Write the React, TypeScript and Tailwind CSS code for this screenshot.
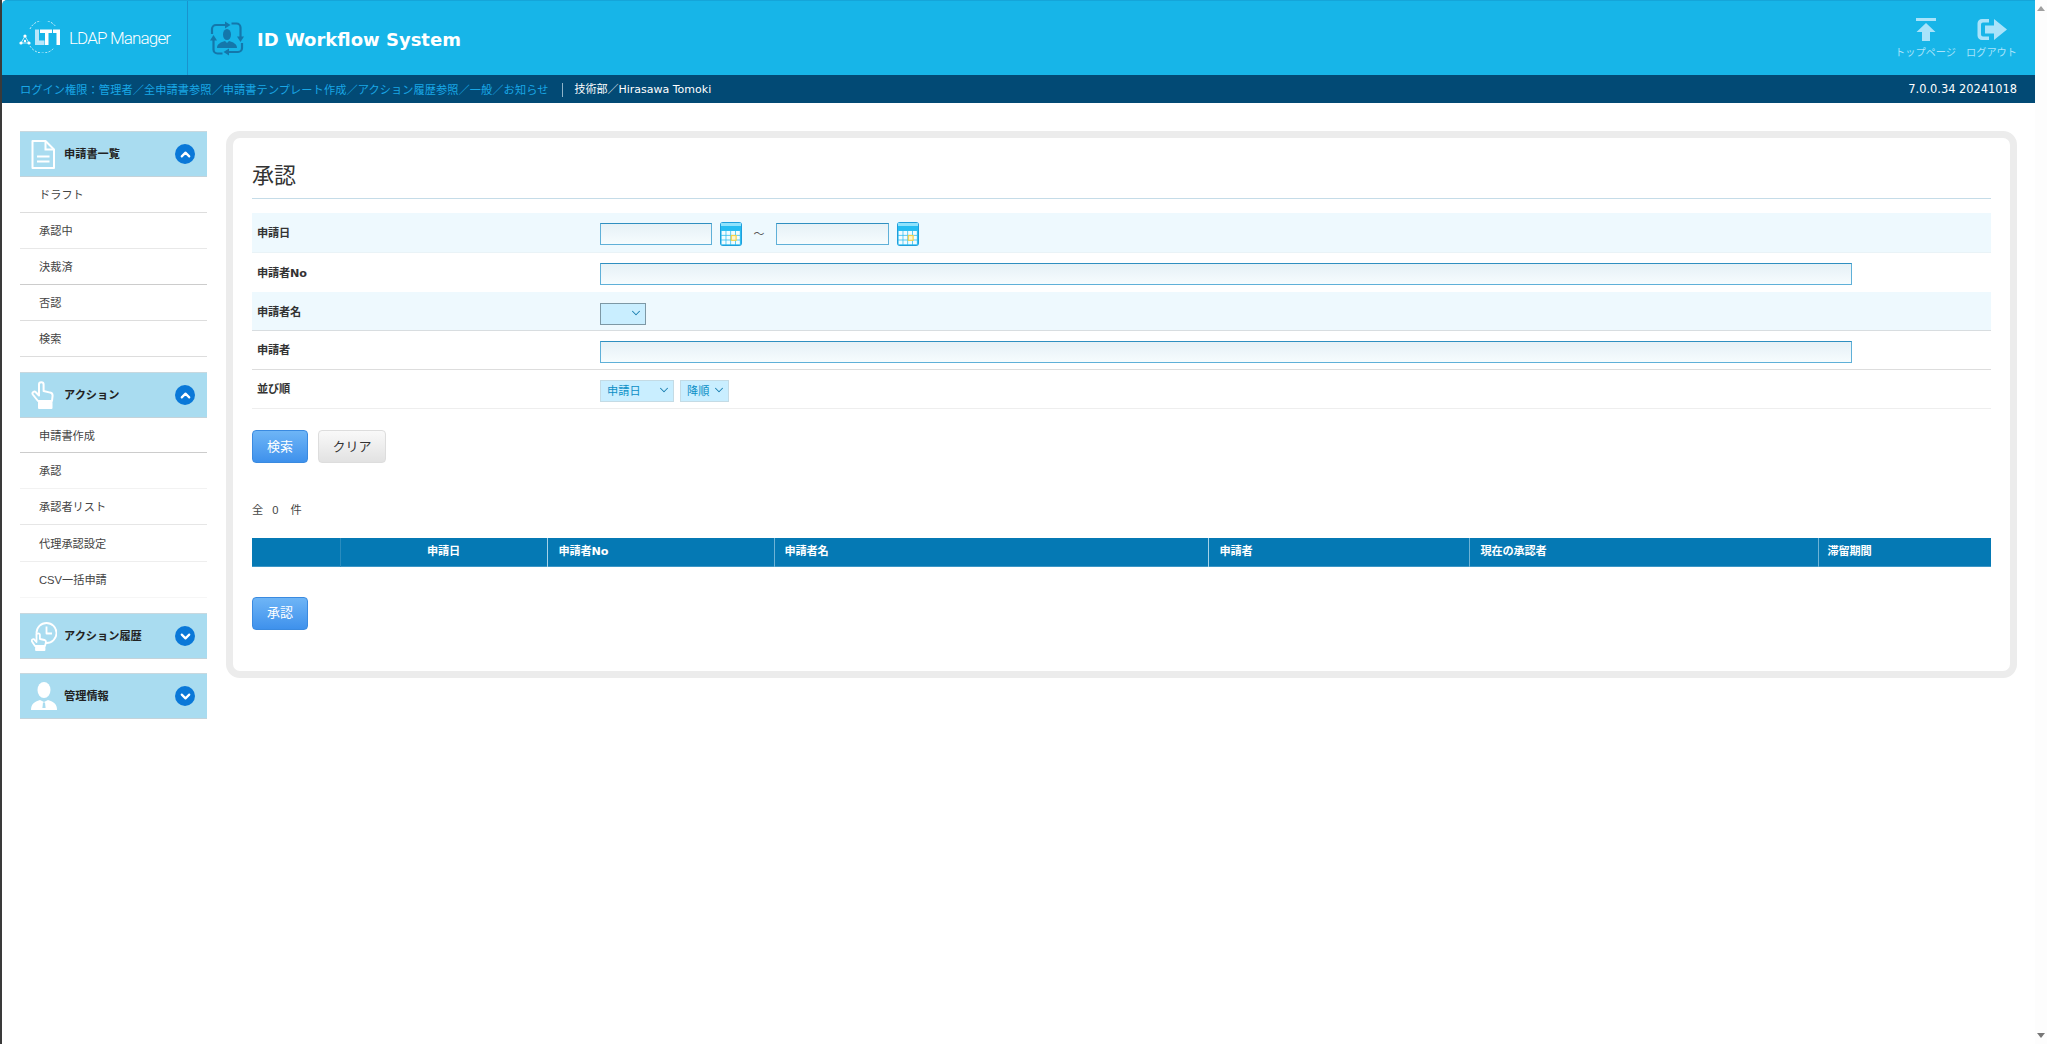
import { ChevronDown, ChevronUp } from "lucide-react";
import type { ReactNode } from "react";

function DocIcon() {
  return (
    <svg width="24" height="29" viewBox="0 0 24 29" fill="none" stroke="#fff" strokeWidth="2">
      <path d="M1.5 1h13L23 9.5V28H1.5z" strokeLinejoin="round" />
      <path d="M14.5 1v8.5H23" />
      <path d="M6 16.5h12.5M6 21.5h12.5" strokeWidth="2.2" />
    </svg>
  );
}

function HandIcon() {
  return (
    <svg width="25" height="28" viewBox="0 0 25 28" fill="none" stroke="#fff" strokeWidth="2" strokeLinejoin="round">
      <path d="M7 20 1.8 13.5a1.9 1.9 0 0 1 3-2.3L8 14.5V3.5a2.3 2.3 0 0 1 4.6 0V10l6.6 1.6a3 3 0 0 1 2.4 3L21 20z" />
      <path d="M8 21.5h12.5V27H8z" fill="#fff" />
    </svg>
  );
}

function ClockHandIcon() {
  return (
    <svg width="26" height="29" viewBox="0 0 26 29" fill="none" stroke="#fff" strokeWidth="1.8" strokeLinejoin="round">
      <circle cx="15.5" cy="11" r="10" />
      <path d="M15.5 4.5V11.500h5.500" />
      <path
        d="M4 24 1 19.500a1.500 1.500 0 0 1 2.500-1.700L5.500 20v-7a1.700 1.700 0 0 1 3.400 0v4l4.500 1a2 2 0 0 1 1.600 2L14 24z"
        fill="#a9dcf0"
      />
      <path d="M5 25.500h8.500V28H5z" fill="#fff" />
    </svg>
  );
}

function PersonIcon() {
  return (
    <svg width="26" height="28" viewBox="0 0 26 28" fill="#fff">
      <ellipse cx="13" cy="8" rx="6.500" ry="8" />
      <path d="M0 28c0-6 3-8 9-10l4 2 4-2c6 2 9 4 9 10z" />
      <path d="M12 20.500h2l.6 5.500h-3.200z" fill="#a9dcf0" />
    </svg>
  );
}

function Logo() {
  return (
    <svg width="42" height="32" viewBox="0 0 42 32" className="mb-[3px] shrink-0">
      <path d="M11 8A15 15 0 0 1 37 6M11 25a15 15 0 0 0 24 2" fill="none" stroke="#d8f2fc" strokeWidth="1" strokeDasharray="2 1.500" />
      <path d="M2 22 6 15 10 22z" fill="none" stroke="#fff" strokeWidth="0.700" />
      <g fill="#fff">
        <circle cx="2" cy="22" r="1.600" />
        <circle cx="6" cy="15" r="1.600" />
        <circle cx="6" cy="20" r="1.200" />
        <circle cx="10" cy="22" r="1.600" />
      </g>
      <path d="M16 8.500h4v11h5.500V24H16z" fill="#b8e6fa" />
      <path d="M21 8.500h12v3.500h-3.500v12H26V12h-5zM34 8.500h7V24h-3.500V12H34z" fill="#fff" />
    </svg>
  );
}

function WorkflowIcon() {
  const seg = (
    <g>
      <path d="M3 14V9a4 4 0 0 1 4-4h10" fill="none" stroke="#1477ab" strokeWidth="2.200" />
      <path d="M16 1.500 21.500 5 16 8.500z" fill="#1477ab" />
    </g>
  );
  return (
    <svg width="36" height="37" viewBox="0 0 36 37" className="shrink-0">
      {seg}
      <g transform="rotate(90 18 18.500)">{seg}</g>
      <g transform="rotate(180 18 18.500)">{seg}</g>
      <g transform="rotate(270 18 18.500)">{seg}</g>
      <ellipse cx="18" cy="14.500" rx="4" ry="5.500" fill="#1477ab" />
      <path d="M8 28c0-4 4-6 8-7l2 2 2-2c4 1 8 3 8 7z" fill="#1477ab" />
    </svg>
  );
}

function CalendarIcon() {
  const cells = [];
  for (let r = 0; r < 3; r++) {
    for (let c = 0; c < 4; c++) {
      cells.push(<rect key={`${r}-${c}`} x={1.600 + c * 4.750} y={9 + r * 4.700} width="4" height="3.900" fill="#f2fcff" />);
    }
  }
  return (
    <svg width="22" height="24" viewBox="0 0 22 24" className="shrink-0">
      <rect x="0" y="0" width="22" height="24" rx="3" fill="#1f9fdc" />
      <rect x="1" y="1" width="20" height="3" fill="#8fe2fc" />
      <rect x="1" y="4" width="20" height="4" fill="#25bdf2" />
      <rect x="1" y="8" width="20" height="15" fill="#2fbdf0" />
      {cells}
      <rect x="11.300" y="13.500" width="4.800" height="4.800" fill="#fdf6d0" stroke="#f4d24a" strokeWidth="1.200" />
    </svg>
  );
}

function TopPageIcon() {
  return (
    <svg width="20" height="23" viewBox="0 0 20 23" fill="#a9e3fa">
      <rect x="0" y="0" width="20" height="3" />
      <path d="M10 5 19.500 14H14v9H6v-9H.5z" />
    </svg>
  );
}

function LogoutIcon() {
  return (
    <svg width="30" height="23" viewBox="0 0 30 23" fill="#a9e3fa">
      <path d="M12 1H5a4.500 4.500 0 0 0-4.500 4.500v12A4.500 4.500 0 0 0 5 22h7v-3.500H6a2 2 0 0 1-2-2v-10a2 2 0 0 1 2-2h6z" />
      <path d="M8 7.500h9V1l13 10.500L17 22v-6.500H8z" />
    </svg>
  );
}

type Group = {
  title: string;
  icon: ReactNode;
  open: boolean;
  className: string;
  items: { label: string; className: string }[];
};

const groups: Group[] = [
  {
    title: "申請書一覧",
    icon: <DocIcon />,
    open: true,
    className: "mb-[15px]",
    items: [
      { label: "ドラフト", className: "h-9 border-[#dddddd]" },
      { label: "承認中", className: "h-9 border-[#e8e8e8]" },
      { label: "決裁済", className: "h-9 border-[#cccccc]" },
      { label: "否認", className: "h-9 border-[#dddddd]" },
      { label: "検索", className: "h-9 border-[#dddddd]" },
    ],
  },
  {
    title: "アクション",
    icon: <HandIcon />,
    open: true,
    className: "mb-[15px]",
    items: [
      { label: "申請書作成", className: "h-[35px] border-[#cccccc]" },
      { label: "承認", className: "h-9 border-[#f2f2f2]" },
      { label: "承認者リスト", className: "h-9 border-[#e6e6e6]" },
      { label: "代理承認設定", className: "h-[37px] border-[#eeeeee]" },
      { label: "CSV一括申請", className: "h-9 border-[#f6f6f6]" },
    ],
  },
  { title: "アクション履歴", icon: <ClockHandIcon />, open: false, className: "mb-[14px]", items: [] },
  { title: "管理情報", icon: <PersonIcon />, open: false, className: "", items: [] },
];

function SideGroup({ group }: { group: Group }) {
  return (
    <div className={group.className}>
      <div className="flex h-[46px] items-center border-y border-t-[#c8d8df] border-b-[#c4d3da] bg-[#a9dcf0] pl-[11px] pr-3">
        <div className="w-[33px] shrink-0">{group.icon}</div>
        <span className="text-[11.200px] font-bold text-[#222222]">{group.title}</span>
        <span className="ml-auto flex size-5 items-center justify-center rounded-full bg-[#0a78d8] text-white">
          {group.open ? <ChevronUp size={15} strokeWidth={3.500} /> : <ChevronDown size={15} strokeWidth={3.500} />}
        </span>
      </div>
      {group.items.map((item) => (
        <div key={item.label} className={`flex items-center border-b pl-[19px] pt-[2px] text-[11.200px] text-[#444444] ${item.className}`}>
          {item.label}
        </div>
      ))}
    </div>
  );
}

function FormRow({ label, className, children }: { label: string; className: string; children: ReactNode }) {
  return (
    <div className={`flex items-center border-b pt-[3px] ${className}`}>
      <div className="w-[348px] shrink-0 pl-[5px] font-['DejaVu_Sans','Noto_Sans_CJK_JP',sans-serif] text-[11.200px] font-bold tracking-[-0.200px] text-[#333333]">
        {label}
      </div>
      {children}
    </div>
  );
}

function TextBox({ className }: { className: string }) {
  return <input type="text" className={`h-[22px] border border-[#5fb0d8] border-t-[#2f8fc0] bg-linear-to-b from-[#e6f1f6] to-[#f6fcfe] ${className}`} />;
}

function Select({ value, className }: { value: string; className: string }) {
  return (
    <div className={`relative mb-[3px] h-[22px] ${className}`}>
      <select
        defaultValue={value}
        className="size-full appearance-none border border-inherit bg-[#c9eeff] pl-[6px] text-[11.200px] text-[#0b8ec6] outline-none"
      >
        <option>{value}</option>
      </select>
      <ChevronDown size={14} strokeWidth={1.800} className="pointer-events-none absolute right-[3px] top-[5px] text-[#1a7fb0]" />
    </div>
  );
}

function Button({ label, kind }: { label: string; kind: "blue" | "gray" }) {
  return (
    <button
      type="button"
      className={
        kind === "blue"
          ? "h-[33px] w-14 rounded-[4px] border border-[#3a8ae0] bg-linear-to-b from-[#6eb5f6] to-[#3e91ec] text-[13px] text-white"
          : "h-[33px] w-[68px] rounded-[4px] border border-[#dddddd] bg-linear-to-b from-[#f9f9f9] to-[#e2e2e2] text-[13px] text-[#333333]"
      }
    >
      {label}
    </button>
  );
}

const columns = [
  { label: "", className: "w-[88px] border-l-0" },
  { label: "申請日", className: "w-[207px] text-center border-[#2a8cbe]" },
  { label: "申請者No", className: "w-[227px] pl-[11px] text-left border-[#a5d2e8]" },
  { label: "申請者名", className: "w-[434px] pl-[10px] text-left border-[#6db3d6]" },
  { label: "申請者", className: "w-[261px] pl-[11px] text-left border-[#a5d2e8]" },
  { label: "現在の承認者", className: "w-[349px] pl-[11px] text-left border-[#6db3d6]" },
  { label: "滞留期間", className: "w-[173px] pl-[9px] text-left border-[#6db3d6]" },
];

export default function App() {
  return (
    <div className="flex h-[1044px] w-full overflow-hidden bg-white font-['Liberation_Sans','Noto_Sans_CJK_JP',sans-serif]">
      <div className="min-w-0 flex-1 border-l-2 border-[#3a3a3a]">
        <header className="flex h-[75px] items-center rounded-tl-[5px] border-t border-[#15a5d9] bg-[#17b5e8]">
          <div className="flex h-full w-[186px] shrink-0 items-center gap-[8px] border-r border-[#1a93cd] pl-[17px] pt-[1px]">
            <Logo />
            <span className="font-['Roboto',sans-serif] text-[17px] font-light tracking-[-0.850px] text-white">LDAP Manager</span>
          </div>
          <div className="ml-[21px]">
            <WorkflowIcon />
          </div>
          <h1 className="ml-3 pt-[3px] font-['DejaVu_Sans',sans-serif] text-[18px] font-bold text-white">ID Workflow System</h1>
          <nav className="ml-auto flex h-full gap-[10px] pr-[18px] pt-[17px] text-[10.200px] text-[#a9e3fa]">
            <a className="flex w-[61px] flex-col items-center gap-[4px]">
              <TopPageIcon />
              トップページ
            </a>
            <a className="flex w-[51px] flex-col items-center gap-[4px]">
              <LogoutIcon />
              ログアウト
            </a>
          </nav>
        </header>
        <div className="flex h-[28px] items-center bg-[#024a75] pl-[18px] pr-[18px] pt-[2px] text-[11.200px]">
          <span className="tracking-[0.080px] text-[#19a7e6]">ログイン権限：管理者／全申請書参照／申請書テンプレート作成／アクション履歴参照／一般／お知らせ</span>
          <span className="ml-[14px] h-[14px] border-l border-[#8fb4c9]" />
          <span className="ml-[11px] font-['DejaVu_Sans','Noto_Sans_CJK_JP',sans-serif] text-[11px] text-white">技術部／Hirasawa Tomoki</span>
          <span className="ml-auto font-['DejaVu_Sans',sans-serif] text-[11.400px] text-white">7.0.0.34 20241018</span>
        </div>
        <div className="flex items-start pl-[18px] pt-[28px]">
          <aside className="w-[187px] shrink-0">
            {groups.map((g) => (
              <SideGroup key={g.title} group={g} />
            ))}
          </aside>
          <main className="ml-[19px] h-[547px] w-[1791px] shrink-0 rounded-[14px] border-[7px] border-[#ececec] px-[19px]">
            <div className="flex h-[61px] items-center border-b border-[#c5dce8] pt-[15px] text-[22px] text-[#333333]">承認</div>
            <div className="mt-[14px]">
              <FormRow label="申請日" className="h-10 border-[#e9f3f7] bg-[#eef9fe]">
                <TextBox className="w-[112px]" />
                <div className="ml-2">
                  <CalendarIcon />
                </div>
                <span className="w-[34px] text-center text-[11px] text-[#555555]">～</span>
                <TextBox className="w-[113px]" />
                <div className="ml-2">
                  <CalendarIcon />
                </div>
              </FormRow>
              <FormRow label="申請者No" className="h-10 border-[#eef9fe] bg-white">
                <TextBox className="w-[1252px]" />
              </FormRow>
              <FormRow label="申請者名" className="h-[38px] border-[#d8dde0] bg-[#eef9fe]">
                <Select value="" className="w-[46px] border-[#7d98a5]" />
              </FormRow>
              <FormRow label="申請者" className="h-[39px] border-[#dddddd] bg-white">
                <TextBox className="w-[1252px]" />
              </FormRow>
              <FormRow label="並び順" className="h-[39px] border-[#eeeeee] bg-white">
                <Select value="申請日" className="w-[74px] border-[#c4dbe5]" />
                <Select value="降順" className="ml-[6px] w-[49px] border-[#c4dbe5]" />
              </FormRow>
            </div>
            <div className="mt-[21px] flex gap-[10px]">
              <Button label="検索" kind="blue" />
              <Button label="クリア" kind="gray" />
            </div>
            <div className="mt-[37px] flex h-5 items-center gap-[9px] pt-[1px] text-[11.200px] text-[#444444]">
              <span>全</span>
              <span>0</span>
              <span className="ml-[3px]">件</span>
            </div>
            <table className="mt-[18px] w-[1739px] table-fixed border-collapse font-['DejaVu_Sans','Noto_Sans_CJK_JP',sans-serif]">
              <thead>
                <tr className="h-[28px] border-b border-[#3d96c5] bg-[#0579b4] text-[11.200px] font-bold tracking-[-0.200px] text-white">
                  {columns.map((c, i) => (
                    <th key={i} className={`border-l pt-[2px] font-bold ${c.className}`}>
                      {c.label}
                    </th>
                  ))}
                </tr>
              </thead>
            </table>
            <div className="mt-[30px]">
              <Button label="承認" kind="blue" />
            </div>
          </main>
        </div>
      </div>
      <div className="flex w-[12px] shrink-0 flex-col items-center justify-between bg-[#fdfdfd] py-[6px]">
        <span className="size-0 border-x-[4px] border-b-[5px] border-x-transparent border-b-[#a0a0a0]" />
        <span className="size-0 border-x-[4px] border-t-[5px] border-x-transparent border-t-[#777777]" />
      </div>
    </div>
  );
}
